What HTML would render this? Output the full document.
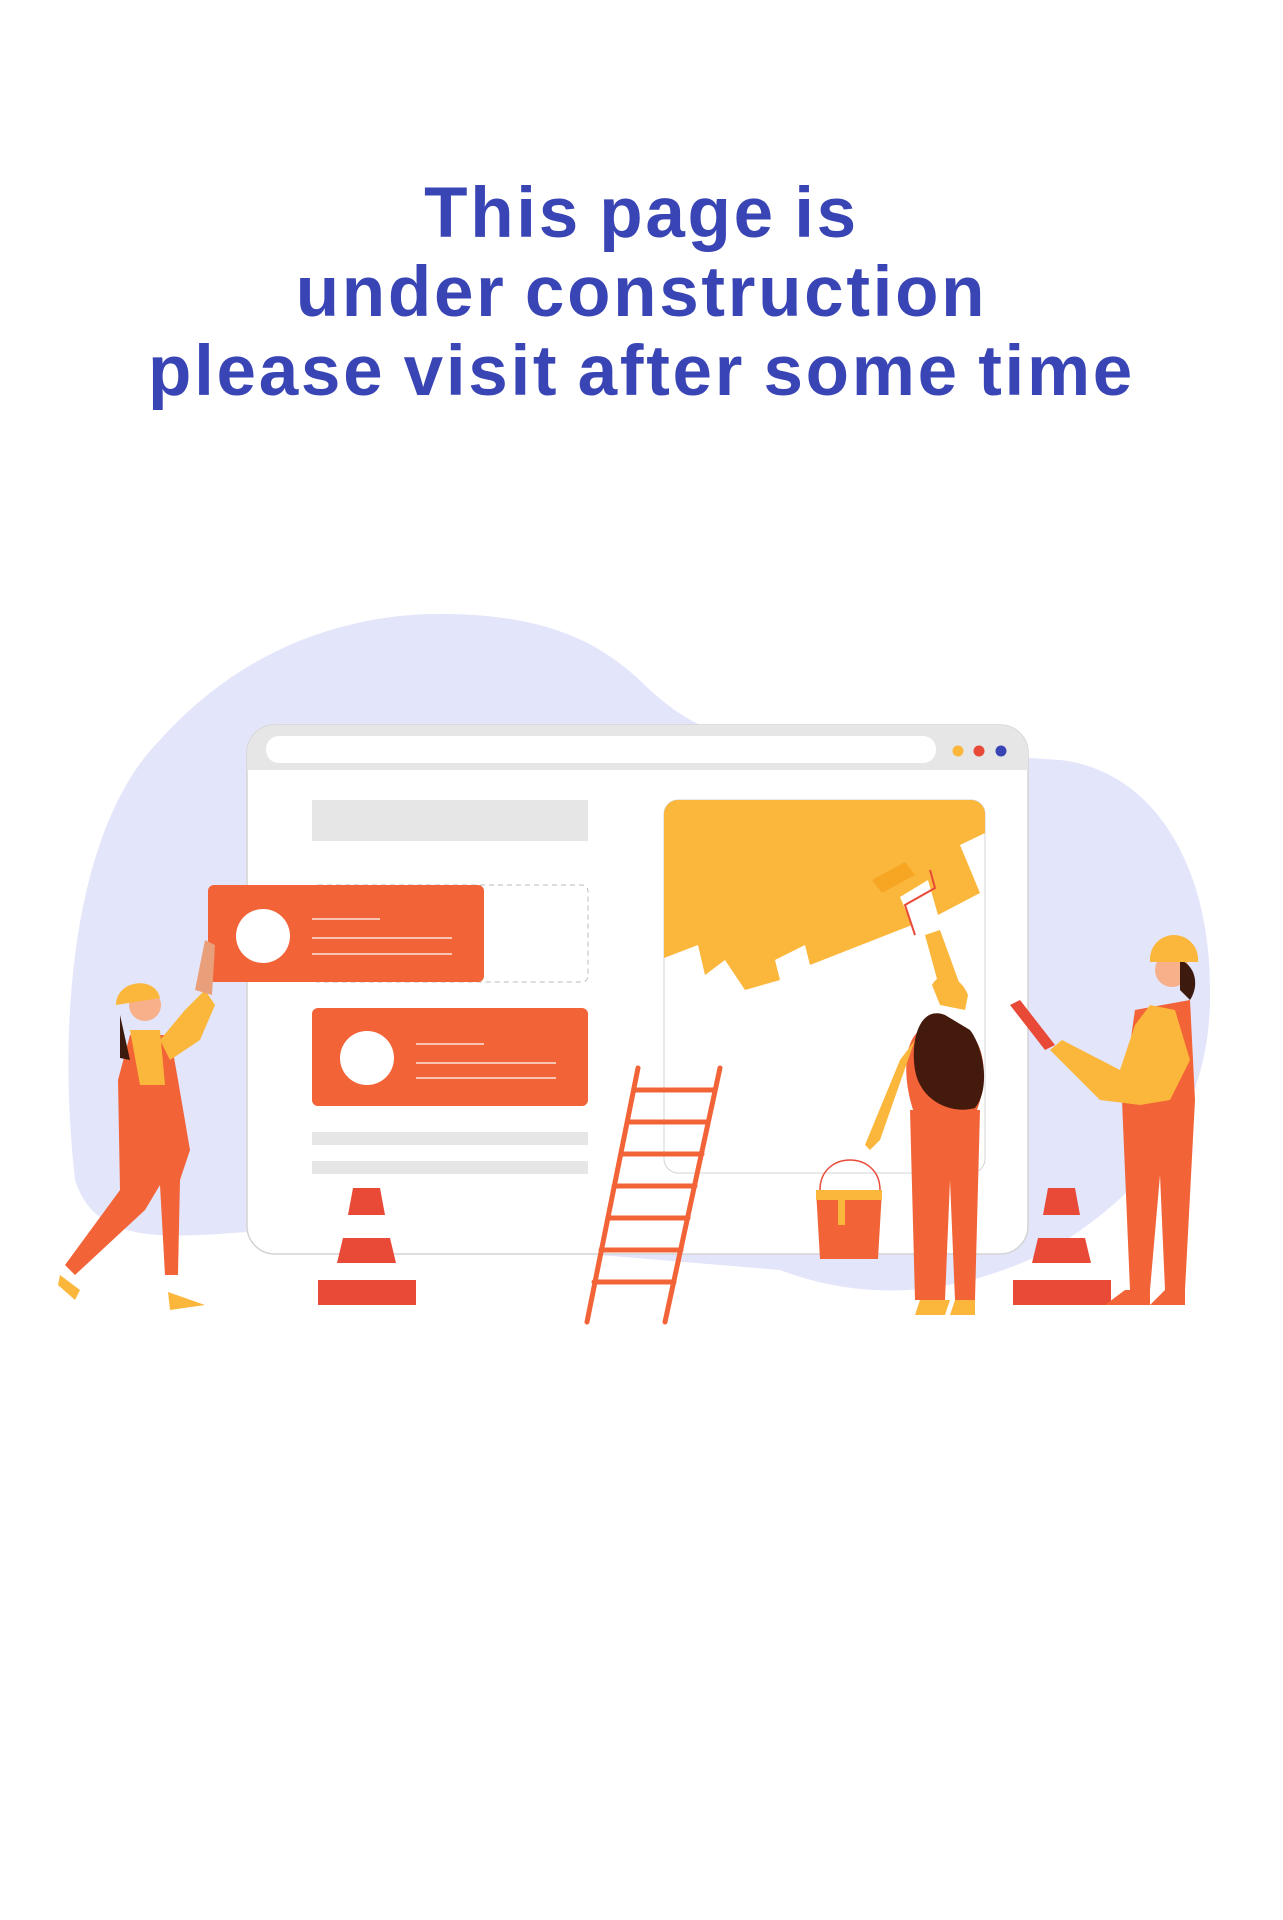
<!DOCTYPE html>
<html><head><meta charset="utf-8"><style>
html,body{margin:0;padding:0;background:#fff;width:1283px;height:1920px;overflow:hidden}
h1{position:absolute;left:0;top:174px;width:1283px;margin:0;text-align:center;font-family:"Liberation Sans",sans-serif;font-weight:700;font-size:71px;line-height:79px;color:#3a45b5;letter-spacing:2.7px;word-spacing:-4px}
svg{position:absolute;left:0;top:0}
</style></head><body>
<h1>This page is<br>under construction<br>please visit after some time</h1>
<svg width="1283" height="1920" viewBox="0 0 1283 1920">
<path d="M75 1180 C55 1000 80 820 160 740 C250 640 360 612 450 614 C560 616 610 650 650 690 C700 735 720 730 760 740 L1060 760 C1150 770 1210 860 1210 990 C1212 1110 1150 1190 1050 1250 C950 1300 860 1300 780 1270 L300 1230 C200 1230 100 1260 75 1180 Z" fill="#e3e5fb"/>
<rect x="247" y="725" width="781" height="529" rx="28" fill="#fff" stroke="#d4d4d4" stroke-width="1.5"/>
<path d="M275 725 H1000 A28 28 0 0 1 1028 753 V770 H247 V753 A28 28 0 0 1 275 725Z" fill="#e6e6e6"/>
<rect x="266" y="736" width="670" height="27" rx="13" fill="#fff"/>
<circle cx="958" cy="751" r="5.5" fill="#fbb73c"/><circle cx="979" cy="751" r="5.5" fill="#e84a37"/><circle cx="1001" cy="751" r="5.5" fill="#3a45b5"/>
<rect x="312" y="800" width="276" height="41" fill="#e6e6e6"/>
<rect x="312" y="885" width="276" height="97" rx="6" fill="none" stroke="#bbb" stroke-dasharray="5 4"/>
<rect x="208" y="885" width="276" height="97" rx="6" fill="#f26337"/>
<ellipse cx="263" cy="936" rx="27" ry="27" fill="#fff"/>
<g stroke="#fff" stroke-width="1.2"><line x1="312" y1="919" x2="380" y2="919"/><line x1="312" y1="938" x2="452" y2="938"/><line x1="312" y1="954" x2="452" y2="954"/></g>
<rect x="312" y="1008" width="276" height="98" rx="6" fill="#f26337"/>
<circle cx="367" cy="1058" r="27" fill="#fff"/>
<g stroke="#fff" stroke-width="1.2"><line x1="416" y1="1044" x2="484" y2="1044"/><line x1="416" y1="1063" x2="556" y2="1063"/><line x1="416" y1="1078" x2="556" y2="1078"/></g>
<rect x="312" y="1132" width="276" height="13" fill="#e6e6e6"/>
<rect x="312" y="1161" width="276" height="13" fill="#e6e6e6"/>
<rect x="664" y="800" width="321" height="373" rx="14" fill="#fff" stroke="#d4d4d4"/>
<path d="M678 800 H971 A14 14 0 0 1 985 814 V833 L960 845 L980 893 L938 915 L928 880 L900 897 L912 925 L810 965 L805 945 L775 960 L780 980 L745 990 L725 960 L705 975 L698 945 L664 958 V814 A14 14 0 0 1 678 800Z" fill="#fbb73c"/>
<path d="M872 880 L905 862 L915 875 L882 893Z" fill="#f7a623"/>
<path d="M930 870 L935 888 L905 905 L915 935" stroke="#e84a37" fill="none" stroke-width="2"/>
<g stroke="#f26337" stroke-width="5" stroke-linecap="round"><line x1="638" y1="1068" x2="587" y2="1322"/><line x1="720" y1="1068" x2="665" y2="1322"/>
<line x1="635" y1="1090" x2="714" y2="1090"/><line x1="628" y1="1122" x2="708" y2="1122"/><line x1="621" y1="1154" x2="702" y2="1154"/><line x1="614" y1="1186" x2="695" y2="1186"/><line x1="608" y1="1218" x2="688" y2="1218"/><line x1="601" y1="1250" x2="681" y2="1250"/><line x1="594" y1="1282" x2="674" y2="1282"/></g>
<g><path d="M353 1188 L380 1188 L385 1215 L348 1215Z" fill="#e84a37"/>
<path d="M343 1238 L390 1238 L396 1263 L337 1263Z" fill="#e84a37"/>
<rect x="318" y="1280" width="98" height="25" fill="#e84a37"/></g>
<g transform="translate(695 0)"><path d="M353 1188 L380 1188 L385 1215 L348 1215Z" fill="#e84a37"/>
<path d="M343 1238 L390 1238 L396 1263 L337 1263Z" fill="#e84a37"/>
<rect x="318" y="1280" width="98" height="25" fill="#e84a37"/></g>
<path d="M820 1190 C820 1150 880 1150 880 1190" stroke="#e84a37" fill="none" stroke-width="1.5"/>
<path d="M816 1190 H882 L878 1259 H820Z" fill="#f26337"/>
<path d="M816 1190 H882 V1200 H845 V1225 H838 V1200 H816Z" fill="#fbb73c"/>
<path d="M130 1035 L170 1035 L178 1080 L190 1150 L180 1180 L178 1275 L165 1275 L160 1185 L145 1210 L75 1275 L65 1265 L120 1190 L118 1080Z" fill="#f26337"/>
<path d="M160 1040 L185 1010 L205 990 L215 1005 L200 1040 L170 1060Z" fill="#fbb73c"/>
<path d="M195 990 L205 940 L215 945 L212 995Z" fill="#e9a07a"/>
<path d="M130 1030 L140 1085 L165 1085 L160 1030Z" fill="#fbb73c"/>
<circle cx="145" cy="1005" r="16" fill="#f7b08a"/>
<path d="M120 1015 L130 1060 L120 1058 Z" fill="#3d1a0e"/>
<path d="M116 1005 C116 980 155 975 160 998Z" fill="#fbb73c"/>
<path d="M60 1275 L80 1290 L75 1300 L58 1285Z" fill="#fbb73c"/><path d="M168 1292 L205 1305 L170 1310Z" fill="#fbb73c"/>
<path d="M920 1030 C900 1045 905 1090 915 1115 L975 1115 C990 1080 985 1040 965 1030Z" fill="#f26337"/>
<path d="M910 1110 L980 1110 L975 1300 L955 1300 L950 1180 L945 1300 L915 1300Z" fill="#f26337"/>
<path d="M945 1015 C920 1005 910 1040 915 1070 C920 1100 950 1115 975 1108 C990 1090 985 1050 970 1030Z" fill="#441a0d"/>
<path d="M915 1040 L880 1140 L870 1150 L865 1145 L900 1060Z" fill="#fbb73c"/>
<path d="M925 935 L940 990 L960 985 L940 930Z" fill="#fbb73c"/>
<path d="M932 985 C940 970 960 975 968 995 L965 1010 L940 1005Z" fill="#fbb73c"/>
<path d="M920 1300 H950 L945 1315 H915Z M955 1300 H975 L975 1315 H950Z" fill="#fbb73c"/>
<path d="M1135 1010 L1190 1000 L1195 1100 L1185 1290 L1165 1290 L1160 1175 L1150 1290 L1130 1290 L1122 1100Z" fill="#f26337"/>
<path d="M1150 1005 L1175 1010 L1190 1060 L1170 1100 L1140 1105 L1100 1100 L1050 1050 L1062 1040 L1120 1070 L1135 1025Z" fill="#fbb73c"/>
<circle cx="1172" cy="970" r="17" fill="#f7b08a"/>
<path d="M1180 960 C1195 965 1200 985 1190 1000 L1180 990Z" fill="#3d1a0e"/>
<path d="M1150 960 A24 24 0 0 1 1198 958 L1198 962 H1150Z" fill="#fbb73c"/>
<path d="M1010 1005 L1020 1000 L1055 1045 L1045 1050Z" fill="#e84a37"/>
<path d="M1125 1290 H1150 L1150 1305 H1105Z M1165 1290 H1185 L1185 1305 H1150Z" fill="#f26337"/>
</svg>
</body></html>
